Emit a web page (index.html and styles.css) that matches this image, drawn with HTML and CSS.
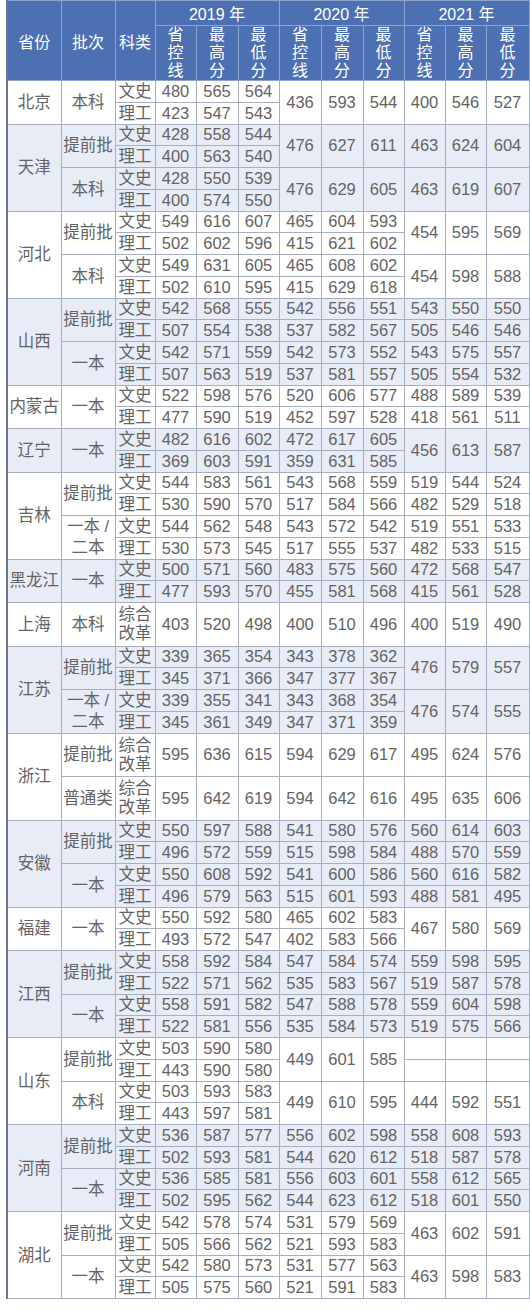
FILE: index.html
```html
<!DOCTYPE html>
<html lang="zh-CN">
<head>
<meta charset="utf-8">
<title>2019-2021 分数线</title>
<link rel="stylesheet" href="styles.css">
</head>
<body>
<table class="scores">
<colgroup>
<col class="c-prov"><col class="c-batch"><col class="c-type">
<col class="c-a"><col class="c-b"><col class="c-a">
<col class="c-b"><col class="c-b"><col class="c-a">
<col class="c-a"><col class="c-a"><col class="c-c">
</colgroup>
<thead>
<tr class="yr"><th rowspan="2">省份</th><th rowspan="2">批次</th><th rowspan="2">科类</th><th colspan="3">2019 年</th><th colspan="3">2020 年</th><th colspan="3">2021 年</th></tr>
<tr class="sub"><th>省<br>控<br>线</th><th>最<br>高<br>分</th><th>最<br>低<br>分</th><th>省<br>控<br>线</th><th>最<br>高<br>分</th><th>最<br>低<br>分</th><th>省<br>控<br>线</th><th>最<br>高<br>分</th><th>最<br>低<br>分</th></tr>
</thead>
<tbody>
<tr><td rowspan="2">北京</td><td rowspan="2">本科</td><td>文史</td><td>480</td><td>565</td><td>564</td><td rowspan="2">436</td><td rowspan="2">593</td><td rowspan="2">544</td><td rowspan="2">400</td><td rowspan="2">546</td><td rowspan="2">527</td></tr>
<tr><td>理工</td><td>423</td><td>547</td><td>543</td></tr>
</tbody>
<tbody class="alt">
<tr><td rowspan="4">天津</td><td rowspan="2">提前批</td><td>文史</td><td>428</td><td>558</td><td>544</td><td rowspan="2">476</td><td rowspan="2">627</td><td rowspan="2">611</td><td rowspan="2">463</td><td rowspan="2">624</td><td rowspan="2">604</td></tr>
<tr><td>理工</td><td>400</td><td>563</td><td>540</td></tr>
<tr><td rowspan="2">本科</td><td>文史</td><td>428</td><td>550</td><td>539</td><td rowspan="2">476</td><td rowspan="2">629</td><td rowspan="2">605</td><td rowspan="2">463</td><td rowspan="2">619</td><td rowspan="2">607</td></tr>
<tr><td>理工</td><td>400</td><td>574</td><td>550</td></tr>
</tbody>
<tbody>
<tr><td rowspan="4">河北</td><td rowspan="2">提前批</td><td>文史</td><td>549</td><td>616</td><td>607</td><td>465</td><td>604</td><td>593</td><td rowspan="2">454</td><td rowspan="2">595</td><td rowspan="2">569</td></tr>
<tr><td>理工</td><td>502</td><td>602</td><td>596</td><td>415</td><td>621</td><td>602</td></tr>
<tr><td rowspan="2">本科</td><td>文史</td><td>549</td><td>631</td><td>605</td><td>465</td><td>608</td><td>602</td><td rowspan="2">454</td><td rowspan="2">598</td><td rowspan="2">588</td></tr>
<tr><td>理工</td><td>502</td><td>610</td><td>595</td><td>415</td><td>629</td><td>618</td></tr>
</tbody>
<tbody class="alt">
<tr><td rowspan="4">山西</td><td rowspan="2">提前批</td><td>文史</td><td>542</td><td>568</td><td>555</td><td>542</td><td>556</td><td>551</td><td>543</td><td>550</td><td>550</td></tr>
<tr><td>理工</td><td>507</td><td>554</td><td>538</td><td>537</td><td>582</td><td>567</td><td>505</td><td>546</td><td>546</td></tr>
<tr><td rowspan="2">一本</td><td>文史</td><td>542</td><td>571</td><td>559</td><td>542</td><td>573</td><td>552</td><td>543</td><td>575</td><td>557</td></tr>
<tr><td>理工</td><td>507</td><td>563</td><td>519</td><td>537</td><td>581</td><td>557</td><td>505</td><td>554</td><td>532</td></tr>
</tbody>
<tbody>
<tr><td rowspan="2">内蒙古</td><td rowspan="2">一本</td><td>文史</td><td>522</td><td>598</td><td>576</td><td>520</td><td>606</td><td>577</td><td>488</td><td>589</td><td>539</td></tr>
<tr><td>理工</td><td>477</td><td>590</td><td>519</td><td>452</td><td>597</td><td>528</td><td>418</td><td>561</td><td>511</td></tr>
</tbody>
<tbody class="alt">
<tr><td rowspan="2">辽宁</td><td rowspan="2">一本</td><td>文史</td><td>482</td><td>616</td><td>602</td><td>472</td><td>617</td><td>605</td><td rowspan="2">456</td><td rowspan="2">613</td><td rowspan="2">587</td></tr>
<tr><td>理工</td><td>369</td><td>603</td><td>591</td><td>359</td><td>631</td><td>585</td></tr>
</tbody>
<tbody>
<tr><td rowspan="4">吉林</td><td rowspan="2">提前批</td><td>文史</td><td>544</td><td>583</td><td>561</td><td>543</td><td>568</td><td>559</td><td>519</td><td>544</td><td>524</td></tr>
<tr><td>理工</td><td>530</td><td>590</td><td>570</td><td>517</td><td>584</td><td>566</td><td>482</td><td>529</td><td>518</td></tr>
<tr><td rowspan="2" class="two">一本 /<br>二本</td><td>文史</td><td>544</td><td>562</td><td>548</td><td>543</td><td>572</td><td>542</td><td>519</td><td>551</td><td>533</td></tr>
<tr><td>理工</td><td>530</td><td>573</td><td>545</td><td>517</td><td>555</td><td>537</td><td>482</td><td>533</td><td>515</td></tr>
</tbody>
<tbody class="alt">
<tr><td rowspan="2">黑龙江</td><td rowspan="2">一本</td><td>文史</td><td>500</td><td>571</td><td>560</td><td>483</td><td>575</td><td>560</td><td>472</td><td>568</td><td>547</td></tr>
<tr><td>理工</td><td>477</td><td>593</td><td>570</td><td>455</td><td>581</td><td>568</td><td>415</td><td>561</td><td>528</td></tr>
</tbody>
<tbody>
<tr class="tall"><td>上海</td><td>本科</td><td>综合<br>改革</td><td>403</td><td>520</td><td>498</td><td>400</td><td>510</td><td>496</td><td>400</td><td>519</td><td>490</td></tr>
</tbody>
<tbody class="alt">
<tr><td rowspan="4">江苏</td><td rowspan="2">提前批</td><td>文史</td><td>339</td><td>365</td><td>354</td><td>343</td><td>378</td><td>362</td><td rowspan="2">476</td><td rowspan="2">579</td><td rowspan="2">557</td></tr>
<tr><td>理工</td><td>345</td><td>371</td><td>366</td><td>347</td><td>377</td><td>367</td></tr>
<tr><td rowspan="2" class="two">一本 /<br>二本</td><td>文史</td><td>339</td><td>355</td><td>341</td><td>343</td><td>368</td><td>354</td><td rowspan="2">476</td><td rowspan="2">574</td><td rowspan="2">555</td></tr>
<tr><td>理工</td><td>345</td><td>361</td><td>349</td><td>347</td><td>371</td><td>359</td></tr>
</tbody>
<tbody>
<tr class="tall"><td rowspan="2">浙江</td><td>提前批</td><td>综合<br>改革</td><td>595</td><td>636</td><td>615</td><td>594</td><td>629</td><td>617</td><td>495</td><td>624</td><td>576</td></tr>
<tr class="tall"><td>普通类</td><td>综合<br>改革</td><td>595</td><td>642</td><td>619</td><td>594</td><td>642</td><td>616</td><td>495</td><td>635</td><td>606</td></tr>
</tbody>
<tbody class="alt">
<tr><td rowspan="4">安徽</td><td rowspan="2">提前批</td><td>文史</td><td>550</td><td>597</td><td>588</td><td>541</td><td>580</td><td>576</td><td>560</td><td>614</td><td>603</td></tr>
<tr><td>理工</td><td>496</td><td>572</td><td>559</td><td>515</td><td>598</td><td>584</td><td>488</td><td>570</td><td>559</td></tr>
<tr><td rowspan="2">一本</td><td>文史</td><td>550</td><td>608</td><td>592</td><td>541</td><td>600</td><td>586</td><td>560</td><td>616</td><td>582</td></tr>
<tr><td>理工</td><td>496</td><td>579</td><td>563</td><td>515</td><td>601</td><td>593</td><td>488</td><td>581</td><td>495</td></tr>
</tbody>
<tbody>
<tr><td rowspan="2">福建</td><td rowspan="2">一本</td><td>文史</td><td>550</td><td>592</td><td>580</td><td>465</td><td>602</td><td>583</td><td rowspan="2">467</td><td rowspan="2">580</td><td rowspan="2">569</td></tr>
<tr><td>理工</td><td>493</td><td>572</td><td>547</td><td>402</td><td>583</td><td>566</td></tr>
</tbody>
<tbody class="alt">
<tr><td rowspan="4">江西</td><td rowspan="2">提前批</td><td>文史</td><td>558</td><td>592</td><td>584</td><td>547</td><td>584</td><td>574</td><td>559</td><td>598</td><td>595</td></tr>
<tr><td>理工</td><td>522</td><td>571</td><td>562</td><td>535</td><td>583</td><td>567</td><td>519</td><td>587</td><td>578</td></tr>
<tr><td rowspan="2">一本</td><td>文史</td><td>558</td><td>591</td><td>582</td><td>547</td><td>588</td><td>578</td><td>559</td><td>604</td><td>598</td></tr>
<tr><td>理工</td><td>522</td><td>581</td><td>556</td><td>535</td><td>584</td><td>573</td><td>519</td><td>575</td><td>566</td></tr>
</tbody>
<tbody>
<tr><td rowspan="4">山东</td><td rowspan="2">提前批</td><td>文史</td><td>503</td><td>590</td><td>580</td><td rowspan="2">449</td><td rowspan="2">601</td><td rowspan="2">585</td><td></td><td></td><td></td></tr>
<tr><td>理工</td><td>443</td><td>590</td><td>580</td><td></td><td></td><td></td></tr>
<tr><td rowspan="2">本科</td><td>文史</td><td>503</td><td>593</td><td>583</td><td rowspan="2">449</td><td rowspan="2">610</td><td rowspan="2">595</td><td rowspan="2">444</td><td rowspan="2">592</td><td rowspan="2">551</td></tr>
<tr><td>理工</td><td>443</td><td>597</td><td>581</td></tr>
</tbody>
<tbody class="alt">
<tr><td rowspan="4">河南</td><td rowspan="2">提前批</td><td>文史</td><td>536</td><td>587</td><td>577</td><td>556</td><td>602</td><td>598</td><td>558</td><td>608</td><td>593</td></tr>
<tr><td>理工</td><td>502</td><td>593</td><td>581</td><td>544</td><td>620</td><td>612</td><td>518</td><td>587</td><td>578</td></tr>
<tr><td rowspan="2">一本</td><td>文史</td><td>536</td><td>585</td><td>581</td><td>556</td><td>603</td><td>601</td><td>558</td><td>612</td><td>565</td></tr>
<tr><td>理工</td><td>502</td><td>595</td><td>562</td><td>544</td><td>623</td><td>612</td><td>518</td><td>601</td><td>550</td></tr>
</tbody>
<tbody>
<tr><td rowspan="4">湖北</td><td rowspan="2">提前批</td><td>文史</td><td>542</td><td>578</td><td>574</td><td>531</td><td>579</td><td>569</td><td rowspan="2">463</td><td rowspan="2">602</td><td rowspan="2">591</td></tr>
<tr><td>理工</td><td>505</td><td>566</td><td>562</td><td>521</td><td>593</td><td>583</td></tr>
<tr><td rowspan="2">一本</td><td>文史</td><td>542</td><td>580</td><td>573</td><td>531</td><td>577</td><td>563</td><td rowspan="2">463</td><td rowspan="2">598</td><td rowspan="2">583</td></tr>
<tr><td>理工</td><td>505</td><td>575</td><td>560</td><td>521</td><td>591</td><td>583</td></tr>
</tbody>
</table>
</body>
</html>
```
FILE: styles.css
```css
html, body {
  margin: 0;
  padding: 0;
  background: #ffffff;
}

body {
  font-family: "Liberation Sans", "Noto Sans CJK SC", sans-serif;
  color: #646464;
}

.scores {
  border-collapse: collapse;
  table-layout: fixed;
  width: 523px;
  margin-left: 6px;
  border-left: 2px solid #6d778a;
  border-bottom: 1px solid #9aa2b3;
}

.c-prov, .c-batch { width: 54px; }
.c-type { width: 40px; }
.c-a { width: 41px; }
.c-b { width: 42px; }
.c-c { width: 43px; }

.scores th,
.scores td {
  padding: 0;
  text-align: center;
  vertical-align: middle;
  overflow: hidden;
  white-space: nowrap;
}

.scores th {
  background: #4d70b3;
  color: #ffffff;
  font-weight: normal;
  font-size: 16px;
  border: 1px solid #8ea4cf;
}

.yr { height: 25px; }
.sub { height: 55px; }
.sub th { line-height: 18px; }

.scores td {
  border: 1px solid #a7aebd;
  font-size: 16.5px;
  line-height: 19px;
  color: #646464;
}

.scores tbody tr { height: 21.75px; }
.scores tbody tr.tall { height: 43.5px; }

.scores td.two { line-height: 21px; }

.alt td { background: #e8ecf6; }
```
